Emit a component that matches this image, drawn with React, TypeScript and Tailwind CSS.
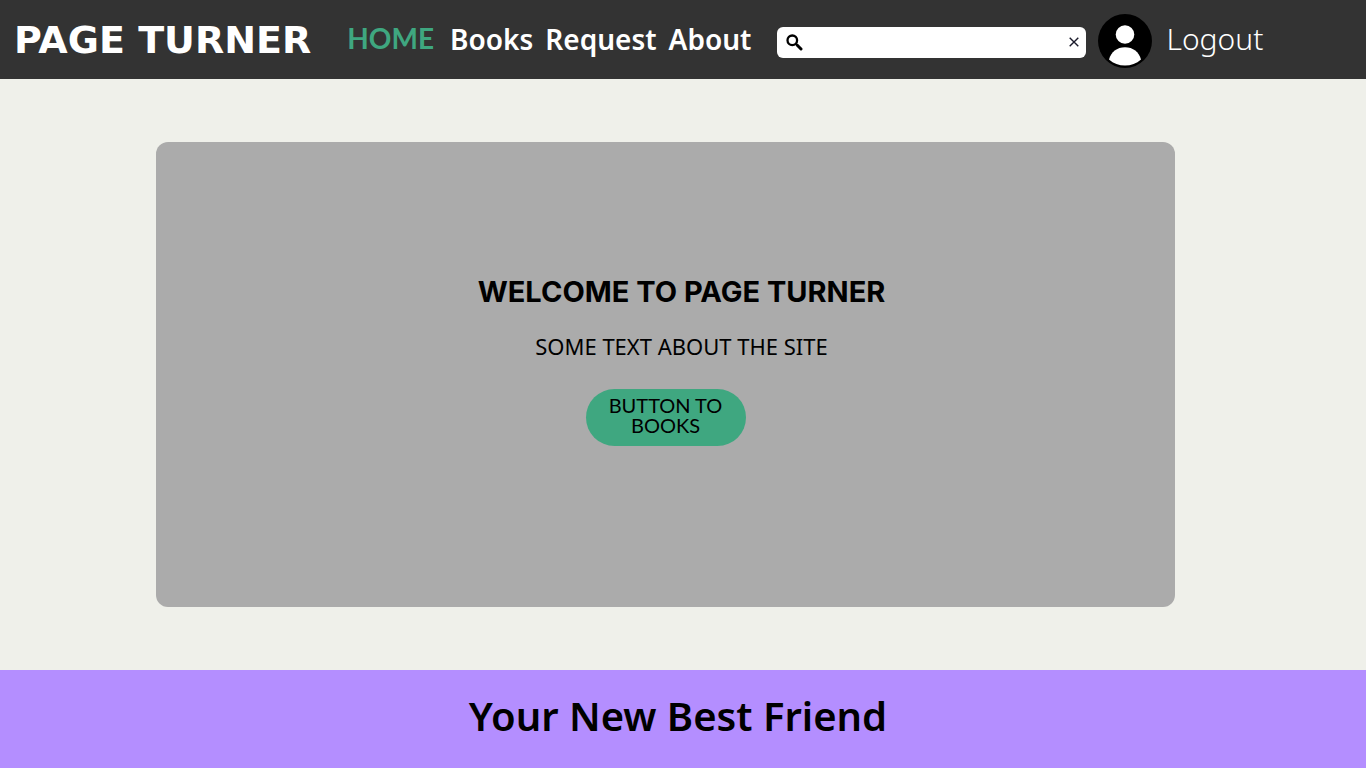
const links = ["Books", "Request", "About"];

function SearchIcon() {
  return (
    <svg viewBox="0 0 17 17" className="size-[17px] shrink-0" fill="none" stroke="#000" aria-hidden="true">
      <circle cx="6.3" cy="6.3" r="4.8" strokeWidth="2.3" />
      <path d="M9.8 9.8 11.6 11.6" strokeWidth="2" />
      <path d="M11.3 11.3 15 15" strokeWidth="3" strokeLinecap="round" />
    </svg>
  );
}

function Avatar() {
  return (
    <svg viewBox="0 0 54 54" className="size-[54px] shrink-0" aria-hidden="true">
      <circle cx="27" cy="27" r="27" fill="#000" />
      <circle cx="27" cy="20.5" r="9.3" fill="#fff" />
      <path d="M11 45.5C13 38 19 33.3 27 33.3S41 38 43 45.5C38.500 49.500 33 51.500 27 51.500S15.500 49.500 11 45.500Z" fill="#fff" />
    </svg>
  );
}

function Header() {
  return (
    <header className="flex h-[79px] items-center bg-[#333333] pl-[14px] text-white">
      <a href="#" className="mr-9 shrink-0 font-['DejaVu_Sans',sans-serif] text-[38px] leading-[44px] font-bold whitespace-nowrap">
        PAGE TURNER
      </a>
      <nav className="flex items-center gap-4 pb-0.5 font-['Noto_Sans',sans-serif] text-[28px] leading-8 font-semibold">
        <a href="#home" className="pb-0.5 font-[Lato,sans-serif] font-bold text-[#3fa780]">
          HOME
        </a>
        <div className="flex gap-3">
          {links.map((link) => (
            <a key={link} href={`#${link.toLowerCase()}`}>
              {link}
            </a>
          ))}
        </div>
      </nav>
      <form className="mt-[5px] ml-[26px] flex h-[31px] max-w-[309px] min-w-0 flex-1 items-center rounded-md bg-white pr-[6px] pl-[9px]">
        <SearchIcon />
        <input type="text" aria-label="Search" className="min-w-0 flex-1 bg-transparent px-2 font-['Noto_Sans',sans-serif] text-base text-black outline-none" />
        <button type="reset" aria-label="Clear search" className="flex size-3 items-center justify-center">
          <svg viewBox="0 0 12 12" className="size-3" fill="none" stroke="#1b1b2b" strokeWidth="1.4" aria-hidden="true">
            <path d="M1.700 1.700 10.300 10.300M10.300 1.700 1.700 10.300" />
          </svg>
        </button>
      </form>
      <a href="#account" aria-label="Account" className="mt-[3px] ml-3 shrink-0">
        <Avatar />
      </a>
      <a href="#logout" className="ml-[14px] pb-0.5 font-['Noto_Sans',sans-serif] text-[30px] leading-8 font-light">
        Logout
      </a>
    </header>
  );
}

export default function App() {
  return (
    <div className="flex min-h-screen flex-col bg-[#eff0ea] font-['Noto_Sans',sans-serif] text-black">
      <Header />
      <main className="py-[63px] pr-[191px] pl-[156px]">
        <section className="flex min-h-[465px] flex-col items-center rounded-xl bg-[#ababab] pt-[130px]">
          <div className="pl-8 text-center">
            <h1 className="font-[Inter,sans-serif] text-[29px] leading-10 font-bold">WELCOME TO PAGE TURNER</h1>
            <p className="mt-[18px] text-[22px] leading-8">SOME TEXT ABOUT THE SITE</p>
          </div>
          <button type="button" className="mt-[27px] h-[57px] w-40 rounded-full bg-[#3fa780] px-4 pb-1.5 font-[Lato,sans-serif] text-[20px] leading-5">
            BUTTON TO BOOKS
          </button>
        </section>
      </main>
      <footer className="flex flex-1 items-center justify-center bg-[#b48eff] pr-[10px] pb-1.5">
        <h2 className="text-[40px] leading-[54px] font-semibold">Your New Best Friend</h2>
      </footer>
    </div>
  );
}
